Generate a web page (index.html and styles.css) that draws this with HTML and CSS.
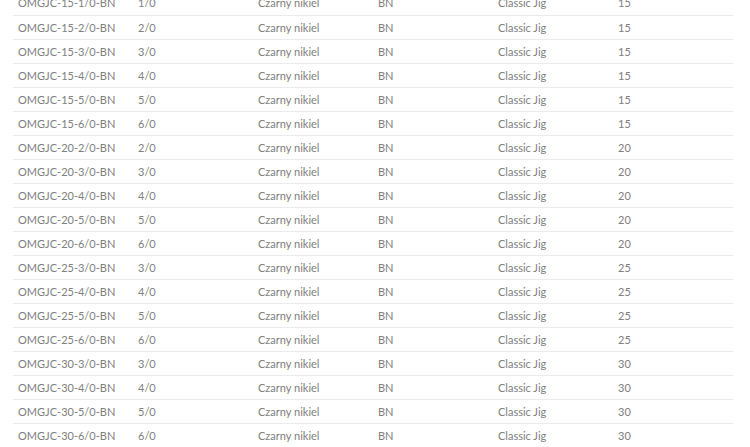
FILE: index.html
```html
<!DOCTYPE html>
<html>
<head>
<meta charset="utf-8">
<link rel="stylesheet" href="styles.css">
</head>
<body>
<div class="wrap">
<table class="spec">
<tbody>
<tr><td>OMGJC-15-1/0-BN</td><td>1/0</td><td>Czarny nikiel</td><td>BN</td><td>Classic Jig</td><td>15</td></tr>
<tr><td>OMGJC-15-2/0-BN</td><td>2/0</td><td>Czarny nikiel</td><td>BN</td><td>Classic Jig</td><td>15</td></tr>
<tr><td>OMGJC-15-3/0-BN</td><td>3/0</td><td>Czarny nikiel</td><td>BN</td><td>Classic Jig</td><td>15</td></tr>
<tr><td>OMGJC-15-4/0-BN</td><td>4/0</td><td>Czarny nikiel</td><td>BN</td><td>Classic Jig</td><td>15</td></tr>
<tr><td>OMGJC-15-5/0-BN</td><td>5/0</td><td>Czarny nikiel</td><td>BN</td><td>Classic Jig</td><td>15</td></tr>
<tr><td>OMGJC-15-6/0-BN</td><td>6/0</td><td>Czarny nikiel</td><td>BN</td><td>Classic Jig</td><td>15</td></tr>
<tr><td>OMGJC-20-2/0-BN</td><td>2/0</td><td>Czarny nikiel</td><td>BN</td><td>Classic Jig</td><td>20</td></tr>
<tr><td>OMGJC-20-3/0-BN</td><td>3/0</td><td>Czarny nikiel</td><td>BN</td><td>Classic Jig</td><td>20</td></tr>
<tr><td>OMGJC-20-4/0-BN</td><td>4/0</td><td>Czarny nikiel</td><td>BN</td><td>Classic Jig</td><td>20</td></tr>
<tr><td>OMGJC-20-5/0-BN</td><td>5/0</td><td>Czarny nikiel</td><td>BN</td><td>Classic Jig</td><td>20</td></tr>
<tr><td>OMGJC-20-6/0-BN</td><td>6/0</td><td>Czarny nikiel</td><td>BN</td><td>Classic Jig</td><td>20</td></tr>
<tr><td>OMGJC-25-3/0-BN</td><td>3/0</td><td>Czarny nikiel</td><td>BN</td><td>Classic Jig</td><td>25</td></tr>
<tr><td>OMGJC-25-4/0-BN</td><td>4/0</td><td>Czarny nikiel</td><td>BN</td><td>Classic Jig</td><td>25</td></tr>
<tr><td>OMGJC-25-5/0-BN</td><td>5/0</td><td>Czarny nikiel</td><td>BN</td><td>Classic Jig</td><td>25</td></tr>
<tr><td>OMGJC-25-6/0-BN</td><td>6/0</td><td>Czarny nikiel</td><td>BN</td><td>Classic Jig</td><td>25</td></tr>
<tr><td>OMGJC-30-3/0-BN</td><td>3/0</td><td>Czarny nikiel</td><td>BN</td><td>Classic Jig</td><td>30</td></tr>
<tr><td>OMGJC-30-4/0-BN</td><td>4/0</td><td>Czarny nikiel</td><td>BN</td><td>Classic Jig</td><td>30</td></tr>
<tr><td>OMGJC-30-5/0-BN</td><td>5/0</td><td>Czarny nikiel</td><td>BN</td><td>Classic Jig</td><td>30</td></tr>
<tr><td>OMGJC-30-6/0-BN</td><td>6/0</td><td>Czarny nikiel</td><td>BN</td><td>Classic Jig</td><td>30</td></tr>
</tbody>
</table>
</div>
</body>
</html>
```

FILE: styles.css
```css
html, body {
  margin: 0;
  padding: 0;
  background: #fff;
}
.wrap {
  padding-left: 13px;
  margin-top: -9px;
}
.spec {
  border-collapse: collapse;
  width: 720px;
  table-layout: fixed;
  font-family: Lato, "Open Sans", sans-serif;
  font-size: 11px;
  color: #808080;
}
.spec td {
  box-sizing: border-box;
  width: 120px;
  height: 24px;
  padding: 0 0 0 5px;
  border-top: 1px solid #ebebeb;
  vertical-align: middle;
  white-space: nowrap;
}
.spec tr:first-child td {
  border-top: none;
}
```
